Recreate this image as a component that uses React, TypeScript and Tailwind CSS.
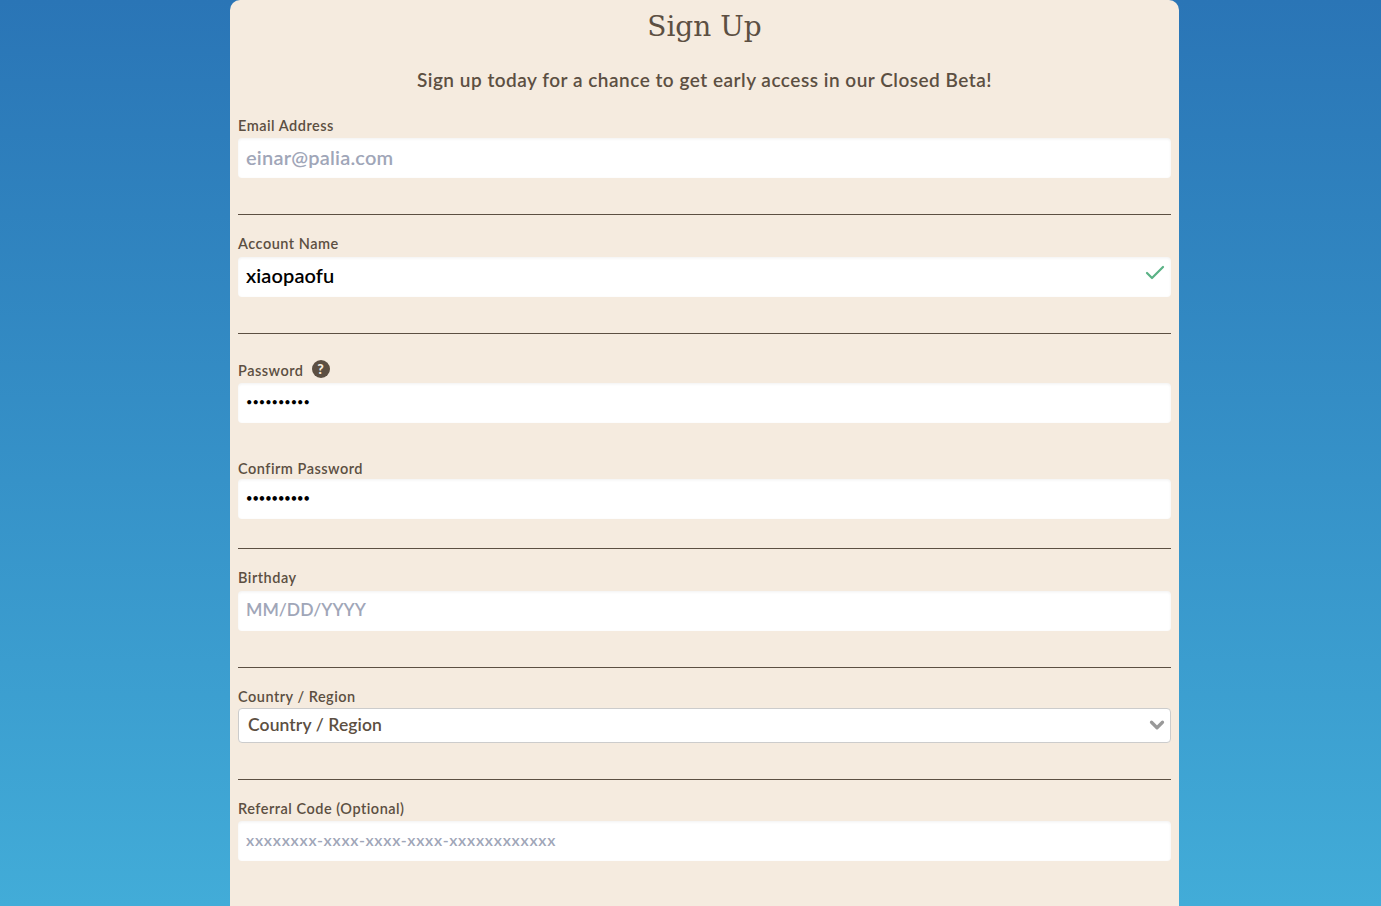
import { ChevronDown, Check } from "lucide-react";

const font = "font-['Lato','Noto_Sans',sans-serif]";

function Label({ children }: { children: React.ReactNode }) {
  return <label className="block h-[20px] text-[14.5px] leading-[20px] font-semibold tracking-[0.5px] text-[#5c4f42]">{children}</label>;
}

function Field({ label, placeholder, value, type = "text", text = "pb-[3px] text-[20px]", gap = "mt-[3px]", check }: { label: string; placeholder?: string; value?: string; type?: string; text?: string; gap?: string; check?: boolean }) {
  return (
    <div>
      <Label>{label}</Label>
      <div className={`relative ${gap}`}>
        <input
          readOnly
          type={type}
          placeholder={placeholder}
          value={value}
          className={`block h-[40px] w-full rounded-[4px] bg-white px-2 font-semibold text-black shadow-[inset_0_1px_3px_rgba(0,0,0,0.06)] outline-none placeholder:text-[#a0a6b8] ${text}`}
        />
        {check && <Check className="absolute right-[4px] top-[4px] text-[#5bb286]" size={24} strokeWidth={2.25} />}
      </div>
    </div>
  );
}

function Divider() {
  return <hr className="border-0 border-t border-[#5c4f42]" />;
}

export default function App() {
  return (
    <div className={`h-[906px] overflow-hidden bg-gradient-to-b from-[#2a75b6] to-[#42acd8] ${font}`}>
      <main className="ml-[230px] h-full w-[949px] rounded-t-[10px] bg-[#f5ebdf] px-2 text-[#5c4f42]">
        <h1 className="pt-[6px] text-center font-['DejaVu_Serif',serif] text-[28px] leading-[42px] text-[#5c4f42]">Sign Up</h1>
        <p className="mt-[18px] text-center text-[19px] leading-[28px] font-semibold tracking-[0.5px]">Sign up today for a chance to get early access in our Closed Beta!</p>

        <div className="mt-[22px]">
          <Field label="Email Address" placeholder="einar@palia.com" text="pb-[3px] text-[20px] tracking-[0.2px]" gap="mt-[2px]" />
          <div className="mt-[36px]"><Divider /></div>
        </div>

        <div className="mt-[19px]">
          <Field label="Account Name" value="xiaopaofu" text="pb-[5px] text-[20px] tracking-[0.1px]" check />
          <div className="mt-[36px]"><Divider /></div>
        </div>

        <div className="mt-[27px]">
          <div className="flex h-[20px] items-center gap-[8px]">
            <Label>Password</Label>
            <span className="-mt-[4px] flex h-[18px] w-[18px] items-center justify-center rounded-full bg-[#5c4f42] text-[14px] leading-none font-black text-[#f5ebdf]">?</span>
          </div>
          <input readOnly type="password" value="••••••••••" className="mt-[2px] block h-[40px] w-full rounded-[4px] bg-white px-2 pb-[3px] text-[11px] text-black shadow-[inset_0_1px_3px_rgba(0,0,0,0.06)] outline-none" />
        </div>

        <div className="mt-[36px]">
          <Field label="Confirm Password" type="password" value="••••••••••" text="pb-[3px] text-[11px]" gap="mt-0" />
          <div className="mt-[29px]"><Divider /></div>
        </div>

        <div className="mt-[19px]">
          <Field label="Birthday" placeholder="MM/DD/YYYY" text="pb-[3px] text-[17.5px]" />
          <div className="mt-[36px]"><Divider /></div>
        </div>

        <div className="mt-[19px]">
          <Label>Country / Region</Label>
          <div className="relative mt-px flex h-[35px] items-center rounded-[4px] border border-[#cccccc] bg-white px-[9px] text-[17.5px] font-semibold tracking-[0.1px] text-[#5c4f42]">
            Country / Region
            <ChevronDown className="absolute right-[2px] top-[5px] text-[#999999]" size={22} strokeWidth={3.5} />
          </div>
          <div className="mt-[36px]"><Divider /></div>
        </div>

        <div className="mt-[19px]">
          <Field label="Referral Code (Optional)" placeholder="xxxxxxxx-xxxx-xxxx-xxxx-xxxxxxxxxxxx" text="pb-[3px] text-[16px] tracking-[0.75px]" gap="mt-[2px]" />
        </div>
      </main>
    </div>
  );
}
